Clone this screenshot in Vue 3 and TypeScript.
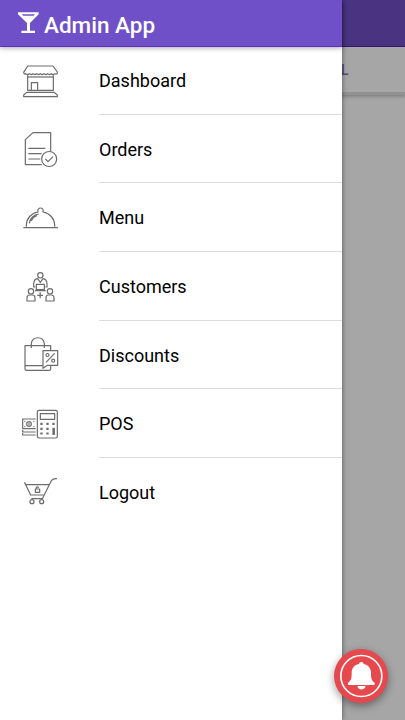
<script setup lang="ts">
interface MenuItem {
  label: string
  viewBox: string
  paths: string[]
}

const items: MenuItem[] = [
  {
    label: 'Dashboard',
    viewBox: '0 -7 150 150',
    paths: [
      'M38 26H114L127 44V47Q125 52 120 49Q115 54 109 49Q103 54 98 49Q92 54 87 49Q81 54 76 49Q70 54 65 49Q59 54 54 49Q48 54 43 49Q37 54 32 49Q26 51 26 45Z',
      'M38 54V99H115V54',
      'M38 59H115',
      'M49 98V76H68V98',
      'M35 105H118L127 113V118H26V113Z',
    ],
  },
  {
    label: 'Orders',
    viewBox: '0 -3 150 150',
    paths: [
      'M80 119H31V44L54 23H107V79',
      'M40 70H91M40 86H80M40 102H76',
      'M125 102A22.500 22.500 0 1 1 80 102A22.500 22.500 0 1 1 125 102Z',
      'M91 102L99 110L114 95',
    ],
  },
  {
    label: 'Menu',
    viewBox: '0 -7 150 150',
    paths: [
      'M25 97H129',
      'M34 94V89A42 40 0 0 1 69 50C64 34 89 34 84 50A42 40 0 0 1 119 89V94',
      'M43 84A33 31 0 0 1 71 56M49 77A27 25 0 0 1 66 61',
    ],
  },
  {
    label: 'Customers',
    viewBox: '0 -5 150 150',
    paths: [
      'M84 38A8 8 0 1 1 68 38A8 8 0 1 1 84 38Z',
      'M61 73H56V65Q56 49 68 48L76 59L84 48Q96 49 96 65V73H91',
      'M64 65H88V81H64ZM60 84H92',
      'M56 86A8 8 0 1 1 40 86A8 8 0 1 1 56 86Z',
      'M113 86A8 8 0 1 1 97 86A8 8 0 1 1 113 86Z',
      'M36 115V106Q36 97 43 97H53Q60 97 60 106V115Z',
      'M93 115V106Q93 97 100 97H110Q117 97 117 106V115Z',
      'M67 98H84M75.500 89V107',
    ],
  },
  {
    label: 'Discounts',
    viewBox: '0 0 150 150',
    paths: [
      'M83 107H30M107 60V47H30V116Q30 121 35 121H102Q107 121 107 116V107',
      'M49 54V42C49 17 88 17 88 42V54',
      'M84 62H128V106H98L84 115Z',
      'M93 97L119 70',
      'M102 75A4.500 4.500 0 1 1 93 75A4.500 4.500 0 1 1 102 75Z',
      'M119 92A4.500 4.500 0 1 1 110 92A4.500 4.500 0 1 1 119 92Z',
    ],
  },
  {
    label: 'POS',
    viewBox: '0 -2 150 150',
    paths: [
      'M72 32H122Q127 32 127 37V110Q127 115 122 115H72Q67 115 67 110V37Q67 32 72 32Z',
      'M76 42H119V59H76Z',
      'M62 58H23V87H62M23 91V97H62M23 100V106H62',
      'M49 73A7 7 0 1 1 35 73A7 7 0 1 1 49 73Z',
      'M42 69V77M28 65H31M28 81H31M55 65H58M55 81H58',
      'M76 71H83M76 74H83M94 71H101M94 74H101M112 71H119M112 74H119',
      'M76 86H83M76 89H83M94 86H101M94 89H101',
      'M76 100H83M76 103H83M94 100H101M94 103H101',
      'M114 86H118V104H114ZM116 87V103',
    ],
  },
  {
    label: 'Logout',
    viewBox: '0 -1 150 150',
    paths: [
      'M126 34C112 34 109 38 106 46L82 94H49',
      'M28 45L32 52L47 83H86M31 52H102',
      'M57 103A6 6 0 1 1 45 103A6 6 0 1 1 57 103Z',
      'M86 103A6 6 0 1 1 74 103A6 6 0 1 1 86 103Z',
      'M61 65H74V75H61ZM64 65V61Q67 56 71 61',
    ],
  },
]
</script>

<template>
  <div class="screen">
    <div class="page">
      <div class="page-bar"></div>
      <div class="page-tabs"><span>L</span></div>
    </div>

    <aside class="drawer">
      <header class="drawer-header">
        <svg class="glass" viewBox="0 0 63 66" aria-hidden="true">
          <path fill-rule="evenodd" d="M0 1H62V7L36 33V56H51V63H10V56H27V33L0 7ZM12 7L15 11H47L51 7Z" />
        </svg>
        <h1>Admin App</h1>
      </header>
      <nav class="menu">
        <a v-for="item in items" :key="item.label" class="item">
          <svg class="icon" :viewBox="item.viewBox" aria-hidden="true">
            <path v-for="d in item.paths" :key="d" :d="d" />
          </svg>
          <span class="label">{{ item.label }}</span>
        </a>
      </nav>
    </aside>

    <button class="alert" aria-label="Notifications">
      <svg viewBox="0 0 162 162" aria-hidden="true">
        <circle cx="82" cy="81" r="61.500" fill="none" stroke="#fff" stroke-width="5" />
        <path
          fill="#fff"
          d="M75 45Q75 39 82 39Q89 39 89 45C103 48 111 57 111 71C111 88 112 94 122 101Q124 108 119 108H45Q40 108 42 101C52 94 53 88 53 71C53 57 61 48 75 45ZM70 111H95C93 125 72 125 70 111Z"
        />
      </svg>
    </button>
  </div>
</template>

<style>
body {
  margin: 0;
  overflow: hidden;
}
</style>

<style scoped>
.screen {
  position: relative;
  width: 405px;
  height: 720px;
  overflow: hidden;
  font-family: Roboto, sans-serif;
}

.page {
  height: 100%;
  background: #a6a6a6;
}

.page-bar {
  box-sizing: border-box;
  height: 47px;
  background: #4a3482;
  border-bottom: 1px solid #3d1680;
}

.page-tabs {
  box-sizing: border-box;
  height: 48px;
  padding: 13px 0 0 341px;
  border-bottom: 3px solid #929292;
  box-shadow: 0 1px 4px rgba(0, 0, 0, 0.3);
  color: #564a86;
  font-size: 14px;
  font-weight: 500;
  line-height: 20px;
}

.drawer {
  position: absolute;
  inset: 0 auto 0 0;
  width: 342px;
  background: #fff;
  box-shadow: 0 0 5px rgba(0, 0, 0, 0.5);
}

.drawer-header {
  position: relative;
  box-sizing: border-box;
  display: flex;
  align-items: center;
  gap: 5px;
  height: 47px;
  padding: 3px 0 0 18px;
  background: #7050c8;
  border-bottom: 1px solid #6030c4;
  box-shadow: 0 1px 5px rgba(0, 0, 0, 0.35);
  color: #fff;
}

.glass {
  width: 21px;
  height: 22px;
  margin-top: -4px;
  fill: #fff;
}

h1 {
  margin: 0;
  font-size: 22.5px;
  font-weight: 500;
  line-height: 28px;
}

.item {
  display: flex;
  align-items: center;
  height: 68.65px;
  padding-left: 15px;
}

.menu {
  margin-top: -1px;
}

.icon {
  flex: none;
  width: 50px;
  height: 50px;
  margin-right: 34px;
  fill: none;
  stroke: #6c6c6c;
  stroke-width: 3.6;
  stroke-linejoin: round;
}

.label {
  box-sizing: border-box;
  flex: 1;
  height: 100%;
  border-bottom: 1px solid #dcdcdc;
  color: #000;
  font-size: 18px;
  line-height: 69.3px;
}

.item:last-child .label {
  border-bottom: 0;
}

.alert {
  position: absolute;
  right: 17px;
  bottom: 17px;
  width: 54px;
  height: 54px;
  padding: 0;
  border: 0;
  border-radius: 50%;
  background: #e5484d;
  box-shadow: 0 3px 8px rgba(0, 0, 0, 0.4);
}

.alert svg {
  display: block;
  width: 54px;
  height: 54px;
}
</style>
